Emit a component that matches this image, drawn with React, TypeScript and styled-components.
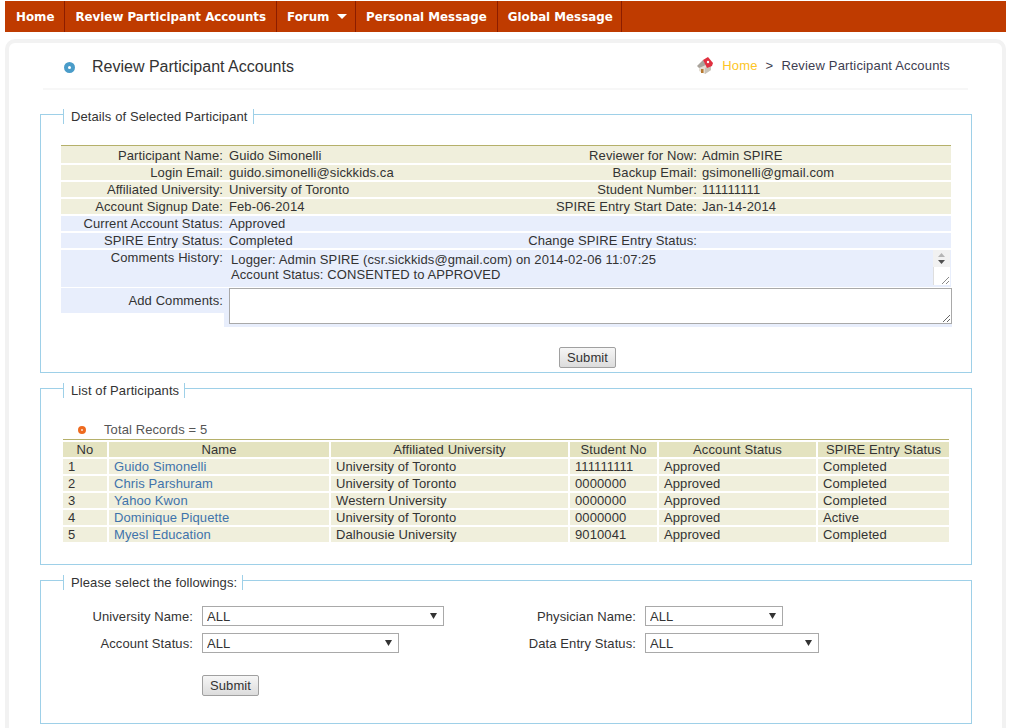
import React from 'react';
import styled, { createGlobalStyle } from 'styled-components';

const detailRows = [
  { left: 'Participant Name:', value: 'Guido Simonelli', right: 'Reviewer for Now:', rightValue: 'Admin SPIRE', tone: 'tan' },
  { left: 'Login Email:', value: 'guido.simonelli@sickkids.ca', right: 'Backup Email:', rightValue: 'gsimonelli@gmail.com', tone: 'tan' },
  { left: 'Affiliated University:', value: 'University of Toronto', right: 'Student Number:', rightValue: '111111111', tone: 'tan' },
  { left: 'Account Signup Date:', value: 'Feb-06-2014', right: 'SPIRE Entry Start Date:', rightValue: 'Jan-14-2014', tone: 'tan' },
  { left: 'Current Account Status:', value: 'Approved', right: '', rightValue: '', tone: 'blue' },
  { left: 'SPIRE Entry Status:', value: 'Completed', right: 'Change SPIRE Entry Status:', rightValue: '', tone: 'blue' },
];

const participants = [
  ['1', 'Guido Simonelli', 'University of Toronto', '111111111', 'Approved', 'Completed'],
  ['2', 'Chris Parshuram', 'University of Toronto', '0000000', 'Approved', 'Completed'],
  ['3', 'Yahoo Kwon', 'Western University', '0000000', 'Approved', 'Completed'],
  ['4', 'Dominique Piquette', 'University of Toronto', '0000000', 'Approved', 'Active'],
  ['5', 'Myesl Education', 'Dalhousie University', '9010041', 'Approved', 'Completed'],
];

const columns = [44, 222, 239, 89, 159, 133];
const headings = ['No', 'Name', 'Affiliated University', 'Student No', 'Account Status', 'SPIRE Entry Status'];

const selectArrow =
  "url(\"data:image/svg+xml,%3Csvg xmlns='http://www.w3.org/2000/svg' width='7' height='6'%3E%3Cpath d='M0 0h7L3.500 6z' fill='%23333'/%3E%3C/svg%3E\")";

const GlobalStyle = createGlobalStyle`
  html, body {
    margin: 0;
    padding: 0;
    background: #fff;
  }
  body {
    font-family: "Liberation Sans", Arial, sans-serif;
    font-size: 13px;
    letter-spacing: 0.1px;
    color: #333;
  }
`;

const Page = styled.div`
  width: 1020px;
  height: 728px;
  overflow: hidden;
  padding: 1px 14px 0 5px;
  box-sizing: border-box;
`;

const Nav = styled.nav`
  display: flex;
  height: 31px;
  background: #bf3b00;
`;

const NavItem = styled.a`
  display: flex;
  align-items: center;
  gap: 8px;
  padding: 0 10px;
  border-right: 1px solid #8c1d00;
  color: #fff;
  font-family: "DejaVu Sans", Verdana, sans-serif;
  font-size: 11.85px;
  font-weight: bold;
  letter-spacing: 0;
  white-space: nowrap;

  &:first-child {
    padding-left: 11px;
  }

  &:last-child {
    padding-right: 8px;
  }
`;

const NavCaret = styled.span`
  width: 0;
  height: 0;
  margin-right: -2.5px;
  border-left: 5px solid transparent;
  border-right: 5px solid transparent;
  border-top: 5px solid #fff;
`;

const Content = styled.main`
  box-sizing: border-box;
  height: 700px;
  margin-top: 7px;
  padding: 0 30px 0 31px;
  border: 4px solid #f2f2f2;
  border-bottom: 0;
  border-radius: 10px 10px 0 0;
`;

const Header = styled.header`
  display: flex;
  align-items: center;
  justify-content: space-between;
  height: 45px;
  margin: 0 4px 24px 3px;
  padding: 0 18px 0 21px;
  border-bottom: 2px solid #f7f7f7;
`;

const PageTitle = styled.h1`
  display: flex;
  align-items: center;
  gap: 17px;
  margin: 0;
  padding-top: 2px;
  font-size: 16px;
  font-weight: normal;
  letter-spacing: 0;
  color: #333;
`;

const TitleBullet = styled.span`
  box-sizing: border-box;
  width: 11px;
  height: 11px;
  margin-top: 1px;
  border: 4px solid #4a9cc9;
  border-radius: 50%;
  background: #fff;
`;

const Breadcrumb = styled.div`
  display: flex;
  align-items: center;
  gap: 8px;
  letter-spacing: 0.17px;
  color: #3d3d50;
`;

const HomeLink = styled.a`
  color: #fdc526;
`;

const Fieldset = styled.section<{ $height: number }>`
  position: relative;
  box-sizing: border-box;
  height: ${(p) => p.$height}px;
  margin-bottom: 15px;
  border: 1px solid #9ed0e8;
`;

const Legend = styled.h2`
  position: absolute;
  top: -6px;
  left: 22px;
  margin: 0;
  padding: 0 5px 0 7px;
  height: 15px;
  line-height: 15px;
  background: #fff;
  border-left: 1px solid #9ed0e8;
  border-right: 1px solid #9ed0e8;
  font-size: 13px;
  font-weight: normal;
  letter-spacing: 0.1px;
`;

const DetailTable = styled.div`
  display: flex;
  flex-direction: column;
  gap: 2px;
  margin: 30px 20px 0;
  border-top: 1px solid #b5b06a;
`;

const DetailRow = styled.div<{ $tone: string }>`
  display: grid;
  grid-template-columns: 163px 1fr;
  height: 15px;
  line-height: 15px;
  background: ${(p) => (p.$tone === 'tan' ? '#f0efdc' : '#e8eefc')};

  &:first-child {
    height: 15px;
    padding-top: 2px;
  }
`;

const DetailPair = styled.div`
  display: grid;
  grid-template-columns: 250px 223px 1fr;
  padding-left: 5px;
`;

const Label = styled.div`
  text-align: right;
  white-space: nowrap;
`;

const RightLabel = styled(Label)`
  padding-right: 5px;
`;

const CommentsRow = styled.div`
  display: grid;
  grid-template-columns: 163px 1fr;
  height: 37px;
  background: #e8eefc;
`;

const RowLabel = styled(Label)`
  line-height: 16px;
  padding-right: 1px;
`;

const CommentsBody = styled.div`
  display: flex;
  justify-content: space-between;
  padding: 2px 1px 0 7px;
  line-height: 15px;
`;

const Scroller = styled.div`
  width: 17px;
  display: flex;
  flex-direction: column;
  flex-shrink: 0;
  margin-top: -2px;
`;

const ScrollArrows = styled.svg`
  width: 17px;
  height: 17px;
  display: block;
  background: #f1f1f1;
`;

const ResizeCorner = styled.svg`
  display: block;
  width: 17px;
  height: 18px;
  box-sizing: border-box;
  background: #fff;
  border-left: 1px solid #dedede;
`;

const AddRow = styled.div`
  display: grid;
  grid-template-columns: 163px 1fr;
  align-items: start;
  margin-top: -1px;
`;

const AddLabel = styled(RowLabel)`
  height: 25px;
  line-height: 26px;
  background: #e8eefc;
`;

const AddField = styled.div`
  height: 39px;
  padding-left: 5px;
  background: #e8eefc;
`;

const CommentInput = styled.textarea`
  display: block;
  box-sizing: border-box;
  width: 723px;
  height: 36px;
  margin: 0;
  padding: 2px;
  border: 1px solid #a9a9a9;
  background: #fff;
`;

const SubmitButton = styled.button`
  box-sizing: border-box;
  width: 57px;
  height: 21px;
  padding: 0;
  border: 1px solid #a0a0a0;
  border-radius: 2px;
  background: linear-gradient(#f6f6f6, #dcdcdc);
  color: #333;
  font-family: inherit;
  font-size: 13px;
  letter-spacing: 0.1px;
`;

const DetailSubmit = styled.div`
  margin: 20px 0 0 518px;
`;

const TotalLine = styled.div`
  display: flex;
  align-items: center;
  gap: 18px;
  margin: 33px 0 0 37px;
  height: 15px;
  color: #555;
`;

const OrangeBullet = styled.span`
  box-sizing: border-box;
  width: 8px;
  height: 8px;
  border: 3px solid #ee6a1f;
  border-radius: 50%;
  background: #fde3d3;
`;

const ListTable = styled.table`
  width: 886px;
  margin: 2px 0 0 22px;
  border-top: 1px solid #b5b06a;
  border-collapse: separate;
  border-spacing: 0;
  table-layout: fixed;
  font-size: 13px;
`;

const Th = styled.th`
  box-sizing: border-box;
  height: 17px;
  padding: 0;
  border-top: 2px solid #fff;
  border-left: 2px solid #fff;
  background: #e4e3c0;
  font-weight: normal;
  text-align: center;
  line-height: 15px;

  &:first-child {
    border-left: 0;
  }
`;

const Td = styled.td`
  box-sizing: border-box;
  height: 17px;
  padding: 0 0 0 5px;
  border-top: 2px solid #fff;
  border-left: 2px solid #fff;
  background: #f0efdc;
  line-height: 15px;
  white-space: nowrap;

  &:first-child {
    border-left: 0;
  }
`;

const NameLink = styled.a`
  color: #3f73ab;
`;

const SelectGrid = styled.div`
  display: grid;
  grid-template-columns: 157px auto 1fr;
  row-gap: 7px;
  margin-top: 25px;
`;

const FieldRow = styled.div`
  display: contents;
`;

const FieldLabel = styled.label`
  height: 20px;
  line-height: 21px;
  padding-right: 5px;
  text-align: right;
  white-space: nowrap;
`;

const RightFieldLabel = styled(FieldLabel)`
  box-sizing: border-box;
  width: 197px;
`;

const SelectBox = styled.select<{ $width: number }>`
  box-sizing: border-box;
  width: ${(p) => p.$width}px;
  height: 20px;
  margin-left: 4px;
  padding: 0 0 0 4px;
  border: 1px solid #a9a9a9;
  border-radius: 0;
  appearance: none;
  background: #fff ${selectArrow} no-repeat right 6px center;
  color: #333;
  font-family: inherit;
  font-size: 13px;
  letter-spacing: 0.1px;
`;

const FieldGroup = styled.div`
  display: flex;
  align-items: center;
`;

const SelectSubmit = styled.div`
  margin: 22px 0 0 161px;
`;

const HomeIcon = () => (
  <svg width="17" height="17" viewBox="0 0 17 17">
    <path d="M2 9v5l6 3 6-4V8z" fill="#e3ddd3" />
    <path d="M8 17l6-4V8l-6 3z" fill="#c9c3b8" />
    <path d="M0 9l6-6 3 5-7 3z" fill="#a9a39b" />
    <path d="M6 3l5-3 5 6-1 3-5 2-2-4z" fill="#e0303f" />
    <circle cx="11" cy="5" r="1.200" fill="#fff" />
    <rect x="4" y="12" width="2.500" height="4" fill="#b87a30" />
  </svg>
);

function App() {
  return (
    <Page>
      <GlobalStyle />
      <Nav>
        <NavItem>Home</NavItem>
        <NavItem>Review Participant Accounts</NavItem>
        <NavItem>
          Forum <NavCaret />
        </NavItem>
        <NavItem>Personal Message</NavItem>
        <NavItem>Global Message</NavItem>
      </Nav>

      <Content>
        <Header>
          <PageTitle>
            <TitleBullet />
            Review Participant Accounts
          </PageTitle>
          <Breadcrumb>
            <HomeIcon />
            <HomeLink>Home</HomeLink>
            <span>&gt;</span>
            <span>Review Participant Accounts</span>
          </Breadcrumb>
        </Header>

        <Fieldset $height={259}>
          <Legend>Details of Selected Participant</Legend>
          <DetailTable>
            {detailRows.map((row) => (
              <DetailRow key={row.left} $tone={row.tone}>
                <RowLabel>{row.left}</RowLabel>
                <DetailPair>
                  <div>{row.value}</div>
                  <RightLabel>{row.right}</RightLabel>
                  <div>{row.rightValue}</div>
                </DetailPair>
              </DetailRow>
            ))}
            <CommentsRow>
              <RowLabel>Comments History:</RowLabel>
              <CommentsBody>
                <div>
                  Logger: Admin SPIRE (csr.sickkids@gmail.com) on 2014-02-06 11:07:25
                  <br />
                  Account Status: CONSENTED to APPROVED
                </div>
                <Scroller>
                  <ScrollArrows viewBox="0 0 17 17">
                    <path d="M5 7l3.500-4 3.500 4z" fill="#b5b5b5" />
                    <path d="M5 10l3.500 4 3.500-4z" fill="#505050" />
                  </ScrollArrows>
                  <ResizeCorner viewBox="0 0 16 18">
                    <path d="M8 17l7-7M12 17l3-3" stroke="#8a8a8a" strokeWidth="1" fill="none" />
                  </ResizeCorner>
                </Scroller>
              </CommentsBody>
            </CommentsRow>
            <AddRow>
              <AddLabel>Add Comments:</AddLabel>
              <AddField>
                <CommentInput />
              </AddField>
            </AddRow>
          </DetailTable>
          <DetailSubmit>
            <SubmitButton>Submit</SubmitButton>
          </DetailSubmit>
        </Fieldset>

        <Fieldset $height={177}>
          <Legend>List of Participants</Legend>
          <TotalLine>
            <OrangeBullet />
            Total Records = 5
          </TotalLine>
          <ListTable>
            <colgroup>
              {columns.map((w, i) => (
                <col key={i} width={w} />
              ))}
            </colgroup>
            <thead>
              <tr>
                {headings.map((h) => (
                  <Th key={h}>{h}</Th>
                ))}
              </tr>
            </thead>
            <tbody>
              {participants.map((p) => (
                <tr key={p[0]}>
                  <Td>{p[0]}</Td>
                  <Td>
                    <NameLink>{p[1]}</NameLink>
                  </Td>
                  <Td>{p[2]}</Td>
                  <Td>{p[3]}</Td>
                  <Td>{p[4]}</Td>
                  <Td>{p[5]}</Td>
                </tr>
              ))}
            </tbody>
          </ListTable>
        </Fieldset>

        <Fieldset $height={144}>
          <Legend>Please select the followings:</Legend>
          <SelectGrid>
            <FieldRow>
              <FieldLabel>University Name:</FieldLabel>
              <FieldGroup>
                <SelectBox $width={242}>
                  <option>ALL</option>
                </SelectBox>
              </FieldGroup>
              <FieldGroup>
                <RightFieldLabel>Physician Name:</RightFieldLabel>
                <SelectBox $width={138}>
                  <option>ALL</option>
                </SelectBox>
              </FieldGroup>
            </FieldRow>
            <FieldRow>
              <FieldLabel>Account Status:</FieldLabel>
              <FieldGroup>
                <SelectBox $width={197}>
                  <option>ALL</option>
                </SelectBox>
              </FieldGroup>
              <FieldGroup>
                <RightFieldLabel>Data Entry Status:</RightFieldLabel>
                <SelectBox $width={174}>
                  <option>ALL</option>
                </SelectBox>
              </FieldGroup>
            </FieldRow>
          </SelectGrid>
          <SelectSubmit>
            <SubmitButton>Submit</SubmitButton>
          </SelectSubmit>
        </Fieldset>
      </Content>
    </Page>
  );
}

export default App;
